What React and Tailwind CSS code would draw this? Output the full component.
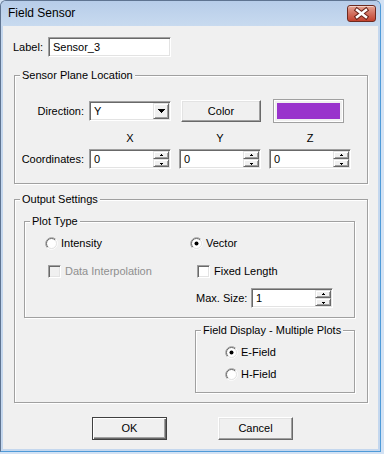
import React from "react";

const sunken =
  "border border-t-[#a0a0a0] border-l-[#a0a0a0] border-b-white border-r-white shadow-[inset_1px_1px_0_#696969,inset_-1px_-1px_0_#e3e3e3]";
const raised =
  "border border-t-white border-l-white border-b-[#696969] border-r-[#696969] shadow-[inset_-1px_-1px_0_#a0a0a0,inset_1px_1px_0_#e3e3e3]";
const scrollBtn =
  "border border-t-[#e3e3e3] border-l-[#e3e3e3] border-b-[#696969] border-r-[#696969] shadow-[inset_1px_1px_0_#fff,inset_-1px_-1px_0_#a0a0a0] bg-[#f0f0f0]";
const etched = "border border-[#a0a0a0] shadow-[inset_1px_1px_0_#fff,1px_1px_0_#fff]";

const GroupBox = ({ title, className, children }) => (
  <div className={`relative shrink-0 ${etched} ${className}`}>
    <span className="absolute left-[5px] top-[-7px] px-[2px] bg-[#f0f0f0] leading-[13px] whitespace-nowrap">
      {title}
    </span>
    {children}
  </div>
);

const Arrow = ({ up }) => (
  <svg width="5" height="3" viewBox="0 0 5 3" shapeRendering="crispEdges">
    {up ? (
      <path d="M2 0h1v1h-1z M1 1h3v1h-3z" fill="#000" />
    ) : (
      <path d="M1 1h3v1h-3z M2 2h1v1h-1z" fill="#000" />
    )}
  </svg>
);

const SpinBox = ({ value }) => (
  <div className={`w-[82px] h-[20px] p-[1px] flex bg-white shrink-0 ${sunken}`}>
    <div className="flex-1 pl-[3px] flex items-center">{value}</div>
    <div className="flex flex-col w-[16px]">
      <div className={`h-[8px] flex items-center justify-center ${scrollBtn}`}>
        <Arrow up />
      </div>
      <div className={`h-[8px] flex items-center justify-center ${scrollBtn}`}>
        <Arrow />
      </div>
    </div>
  </div>
);

const Combo = ({ value }) => (
  <div className={`w-[82px] h-[20px] p-[1px] flex bg-white shrink-0 ${sunken}`}>
    <div className="flex-1 pl-[3px] flex items-center">{value}</div>
    <div className={`w-[16px] flex items-center justify-center ${scrollBtn}`}>
      <svg width="7" height="4" viewBox="0 0 7 4" shapeRendering="crispEdges">
        <path d="M0 0h7v1h-7z M1 1h5v1h-5z M2 2h3v1h-3z M3 3h1v1h-1z" fill="#000" />
      </svg>
    </div>
  </div>
);

const Radio = ({ checked }) => (
  <svg width="13" height="13" viewBox="0 0 13 13" className="shrink-0">
    <circle cx="6.5" cy="6.5" r="5" fill="#fff" />
    <path d="M2.26 10.74 A6 6 0 0 1 10.74 2.26" fill="none" stroke="#a0a0a0" />
    <path d="M10.74 2.26 A6 6 0 0 1 2.26 10.74" fill="none" stroke="#fff" />
    <path d="M2.96 10.04 A5 5 0 0 1 10.04 2.96" fill="none" stroke="#696969" />
    <path d="M10.04 2.96 A5 5 0 0 1 2.96 10.04" fill="none" stroke="#e3e3e3" />
    {checked && <circle cx="6.5" cy="6.5" r="2" fill="#000" />}
  </svg>
);

const Check = ({ disabled }) => (
  <div className={`w-[13px] h-[13px] shrink-0 ${disabled ? "bg-[#f0f0f0]" : "bg-white"} ${sunken}`} />
);

const App = () => {
  return (
    <div className="w-[384px] h-[454px] bg-[#d3e2f4] font-['Liberation_Sans',Arial,sans-serif] text-[11px] leading-[13px] text-black">
      <div className="w-[381px] h-[452px] flex flex-col rounded-t-[6px] border border-t-[#5f7491] border-l-[#5f7491] border-r-[#4e9ad8] border-b-[#4e9ad8] bg-[#c4d7ee]">
        {/* title bar */}
        <div className="h-[25px] shrink-0 flex items-start rounded-t-[5px] bg-gradient-to-b from-[#b7cde9] to-[#c8daef]">
          <span className="ml-[7px] mt-[5px] text-[12px] leading-[15px]">Field Sensor</span>
          <div className="ml-auto mr-[4px] mt-[4px] w-[29px] h-[17px] rounded-[3px] border border-[#6d2a20] bg-gradient-to-b from-[#e6a493] via-[#d2705f] to-[#c3412d] shadow-[inset_0_1px_0_rgba(255,255,255,0.5)] flex items-center justify-center">
            <svg width="27" height="15" viewBox="0 0 27 15">
              <path d="M9 4 L18 11 M18 4 L9 11" stroke="#6a2318" strokeWidth="4.5" strokeLinecap="square" />
              <path d="M9 4 L18 11 M18 4 L9 11" stroke="#fff" strokeWidth="2.5" strokeLinecap="square" />
            </svg>
          </div>
        </div>

        {/* client area */}
        <div className="mx-[2px] h-[423px] bg-[#f0f0f0] flex flex-col">
          <div className="mt-[11px] ml-[10px] h-[20px] flex items-center">
            <span className="w-[35px]">Label:</span>
            <div className={`w-[123px] h-[20px] pl-[4px] flex items-center bg-white ${sunken}`}>Sensor_3</div>
          </div>

          <GroupBox title="Sensor Plane Location" className="mt-[18px] ml-[11px] w-[354px] h-[109px]">
            <div className="mt-[23px] h-[24px] flex items-center">
              <span className="w-[69px] text-right">Direction:</span>
              <div className="ml-[5px]">
                <Combo value="Y" />
              </div>
              <button className={`ml-[10px] w-[80px] h-[22px] bg-[#f0f0f0] ${raised}`}>Color</button>
              <div className="ml-[12px] w-[71px] h-[24px] p-[3px] border border-[#a0a0a0] shadow-[inset_1px_1px_0_#fff,inset_-1px_-1px_0_#fff]">
                <div className="w-full h-full bg-[#9933cc]" />
              </div>
            </div>
            <div className="mt-[9px] h-[13px] flex">
              <span className="w-[74px]" />
              <span className="w-[82px] text-center">X</span>
              <span className="ml-[8px] w-[82px] text-center">Y</span>
              <span className="ml-[8px] w-[82px] text-center">Z</span>
            </div>
            <div className="mt-[4px] h-[20px] flex items-center">
              <span className="w-[69px] text-right">Coordinates:</span>
              <div className="ml-[5px]">
                <SpinBox value="0" />
              </div>
              <div className="ml-[8px]">
                <SpinBox value="0" />
              </div>
              <div className="ml-[8px]">
                <SpinBox value="0" />
              </div>
            </div>
          </GroupBox>

          <GroupBox title="Output Settings" className="mt-[15px] ml-[11px] w-[354px] h-[204px] flex flex-col">
            <GroupBox title="Plot Type" className="mt-[21px] ml-[9px] w-[331px] h-[97px]">
              <div className="mt-[15px] ml-[20px] h-[13px] flex items-center">
                <div className="w-[145px] flex items-center">
                  <Radio />
                  <span className="ml-[3px]">Intensity</span>
                </div>
                <div className="flex items-center">
                  <Radio checked />
                  <span className="ml-[3px]">Vector</span>
                </div>
              </div>
              <div className="mt-[15px] ml-[23px] h-[13px] flex items-center">
                <div className="w-[149px] flex items-center">
                  <Check disabled />
                  <span className="ml-[4px] text-[#8f8f8f]">Data Interpolation</span>
                </div>
                <div className="flex items-center">
                  <Check />
                  <span className="ml-[4px]">Fixed Length</span>
                </div>
              </div>
              <div className="mt-[10px] ml-[171px] h-[20px] flex items-center">
                <span className="w-[55px]">Max. Size:</span>
                <SpinBox value="1" />
              </div>
            </GroupBox>

            <GroupBox title="Field Display - Multiple Plots" className="mt-[12px] ml-[180px] w-[160px] h-[63px]">
              <div className="mt-[15px] ml-[29px] h-[13px] flex items-center">
                <Radio checked />
                <span className="ml-[3px]">E-Field</span>
              </div>
              <div className="mt-[9px] ml-[29px] h-[13px] flex items-center">
                <Radio />
                <span className="ml-[3px]">H-Field</span>
              </div>
            </GroupBox>
          </GroupBox>

          <div className="mt-[14px] ml-[89px] flex">
            <button className="w-[75px] h-[23px] bg-[#f0f0f0] border border-[#404040] shadow-[inset_1px_1px_0_#fff,inset_-1px_-1px_0_#696969,inset_-2px_-2px_0_#a0a0a0]">
              OK
            </button>
            <button className={`ml-[51px] w-[75px] h-[23px] bg-[#f0f0f0] ${raised}`}>Cancel</button>
          </div>
        </div>
      </div>
    </div>
  );
};

export default App;
